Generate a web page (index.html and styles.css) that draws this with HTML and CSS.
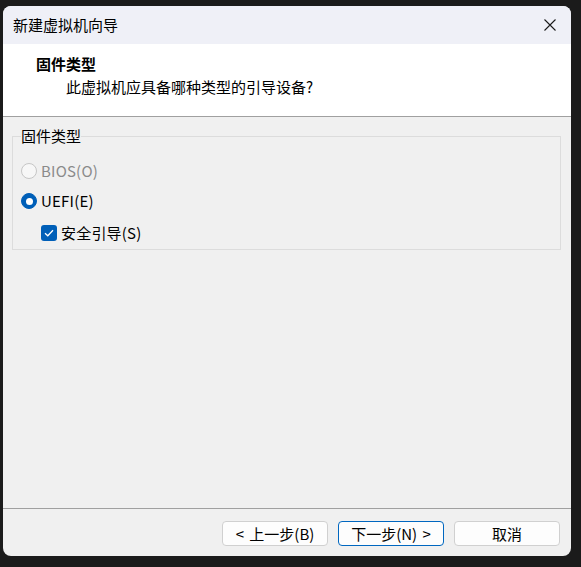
FILE: index.html
```html
<!DOCTYPE html>
<html lang="zh-CN">
<head>
<meta charset="utf-8">
<title>新建虚拟机向导</title>
<link rel="stylesheet" href="styles.css">
</head>
<body>
<div class="window">
  <div class="titlebar">
    <span class="title">新建虚拟机向导</span>
    <span class="close">
      <svg width="12" height="12" viewBox="0 0 12 12"><path d="M0.5 0.5 L11.5 11.5 M11.5 0.5 L0.5 11.5" stroke="#1a1a1a" stroke-width="1.1" fill="none"/></svg>
    </span>
  </div>
  <div class="header">
    <div class="h-title">固件类型</div>
    <div class="h-sub">此虚拟机应具备哪种类型的引导设备?</div>
  </div>
  <div class="content">
    <fieldset class="group">
      <legend class="legend">固件类型</legend>
      <div class="row row-bios disabled">
        <span class="radio"></span><span class="label">BIOS(O)</span>
      </div>
      <div class="row row-uefi">
        <span class="radio checked"></span><span class="label">UEFI(E)</span>
      </div>
      <div class="row row-secure">
        <span class="checkbox">
          <svg width="10" height="8" viewBox="0 0 10 8"><path d="M1 4.2 L3.8 6.8 L9 1.2" stroke="#fff" stroke-width="1.3" fill="none"/></svg>
        </span><span class="label">安全引导(S)</span>
      </div>
    </fieldset>
  </div>
  <div class="footer">
    <button class="btn">&lt; 上一步(B)</button>
    <button class="btn btn-default">下一步(N) &gt;</button>
    <button class="btn">取消</button>
  </div>
</div>
</body>
</html>
```
FILE: styles.css
```css
* { box-sizing: border-box; }
html, body {
  margin: 0;
  padding: 0;
  background: #1b1b1b;
  width: 581px;
  height: 567px;
  overflow: hidden;
}
body {
  font-family: "Noto Sans CJK SC", "Noto Sans", sans-serif;
  font-size: 15px;
  line-height: 20px;
  color: #000;
}
.window {
  margin: 6px 0 0 3px;
  width: 568px;
  height: 550px;
  border-radius: 8px;
  overflow: hidden;
  background: #f0f0f0;
  display: flex;
  flex-direction: column;
}
.titlebar {
  height: 38px;
  flex: none;
  background: #eff0f7;
  display: flex;
  align-items: center;
  justify-content: space-between;
  padding: 0 15px 0 10px;
}
.title { font-size: 15px; }
.close { display: flex; width: 12px; height: 12px; }
.header {
  height: 73px;
  flex: none;
  background: #fff;
  border-bottom: 1px solid #a0a0a0;
  padding: 10px 0 0 33px;
}
.h-title { font-weight: bold; }
.h-sub { margin-top: 3px; padding-left: 30px; }
.content {
  flex: 1;
  padding: 9px 10px 0 9px;
}
.group {
  margin: 0;
  border: 1px solid #dcdcdc;
  padding: 15px 8px 6px 8px;
  min-width: 0;
}
.legend {
  padding: 0;
  margin-left: 0;
}
.row {
  height: 20px;
  display: flex;
  align-items: center;
}
.row-uefi { margin-top: 10px; }
.row-secure { margin-top: 12px; padding-left: 20px; }
.radio {
  width: 16px;
  height: 16px;
  border-radius: 50%;
  border: 1px solid #c6c6c6;
  background: #f7f7f7;
  margin-right: 4px;
  flex: none;
  display: flex;
  align-items: center;
  justify-content: center;
}
.radio.checked {
  border-color: #005fb8;
  background: #005fb8;
}
.radio.checked::after {
  content: "";
  width: 7px;
  height: 7px;
  border-radius: 50%;
  background: #fff;
}
.label { letter-spacing: 0.2px; }
.disabled .label { color: #8a8a8a; }
.checkbox {
  width: 16px;
  height: 16px;
  border-radius: 3px;
  background: #005fb8;
  margin-right: 4px;
  flex: none;
  display: flex;
  align-items: center;
  justify-content: center;
}
.footer {
  height: 48px;
  flex: none;
  border-top: 1px solid #a0a0a0;
  display: flex;
  justify-content: flex-end;
  gap: 10px;
  padding: 12px 11px 0 0;
}
.btn {
  width: 106px;
  height: 25px;
  font: inherit;
  font-size: 15px;
  line-height: 20px;
  color: #000;
  background: #fdfdfd;
  border: 1px solid #d0d0d0;
  border-radius: 4px;
  padding: 0;
  word-spacing: 2px;
}
.btn-default {
  border-color: #0067c0;
}
```
